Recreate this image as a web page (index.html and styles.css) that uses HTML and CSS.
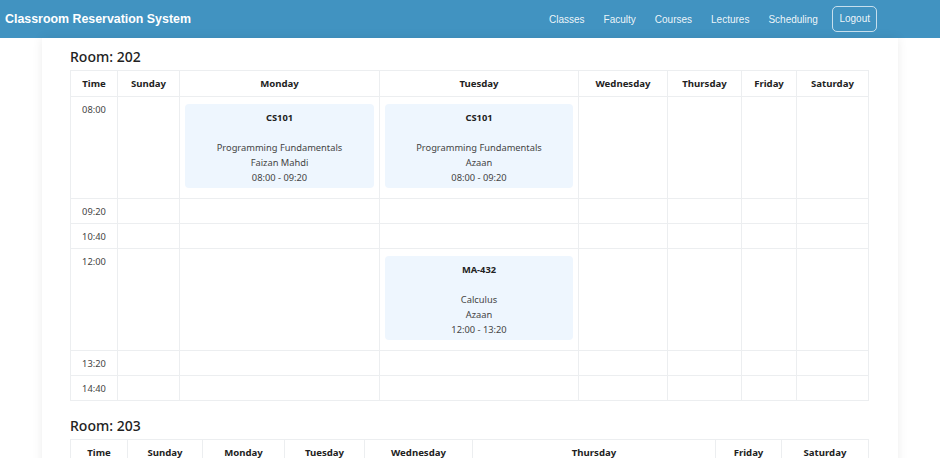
FILE: index.html
```html
<!DOCTYPE html>
<html lang="en">
<head>
<meta charset="utf-8">
<title>Classroom Reservation System</title>
<link rel="stylesheet" href="styles.css">
</head>
<body>
<nav class="navbar">
  <div class="brand">Classroom Reservation System</div>
  <ul class="nav-links">
    <li><a href="#">Classes</a></li>
    <li><a href="#">Faculty</a></li>
    <li><a href="#">Courses</a></li>
    <li><a href="#">Lectures</a></li>
    <li><a href="#">Scheduling</a></li>
    <li><a href="#" class="logout">Logout</a></li>
  </ul>
</nav>

<main class="container">
  <section class="room">
    <h3 class="room-title">Room: 202</h3>
    <table class="schedule">
      <colgroup>
        <col class="w47"><col class="w62"><col class="w200"><col class="w199"><col class="w89"><col class="w74"><col class="w55"><col class="w72">
      </colgroup>
      <thead>
        <tr><th>Time</th><th>Sunday</th><th>Monday</th><th>Tuesday</th><th>Wednesday</th><th>Thursday</th><th>Friday</th><th>Saturday</th></tr>
      </thead>
      <tbody>
        <tr>
          <td class="time">08:00</td><td></td>
          <td><div class="lecture"><strong>CS101</strong><br><br>Programming Fundamentals<br>Faizan Mahdi<br>08:00 - 09:20</div></td>
          <td><div class="lecture"><strong>CS101</strong><br><br>Programming Fundamentals<br>Azaan<br>08:00 - 09:20</div></td>
          <td></td><td></td><td></td><td></td>
        </tr>
        <tr><td class="time">09:20</td><td></td><td></td><td></td><td></td><td></td><td></td><td></td></tr>
        <tr><td class="time">10:40</td><td></td><td></td><td></td><td></td><td></td><td></td><td></td></tr>
        <tr>
          <td class="time">12:00</td><td></td><td></td>
          <td><div class="lecture"><strong>MA-432</strong><br><br>Calculus<br>Azaan<br>12:00 - 13:20</div></td>
          <td></td><td></td><td></td><td></td>
        </tr>
        <tr><td class="time">13:20</td><td></td><td></td><td></td><td></td><td></td><td></td><td></td></tr>
        <tr><td class="time">14:40</td><td></td><td></td><td></td><td></td><td></td><td></td><td></td></tr>
      </tbody>
    </table>
  </section>

  <section class="room">
    <h3 class="room-title">Room: 203</h3>
    <table class="schedule">
      <colgroup>
        <col class="w57"><col class="w75"><col class="w82"><col class="w80"><col class="w108"><col class="w243"><col class="w66"><col class="w87">
      </colgroup>
      <thead>
        <tr><th>Time</th><th>Sunday</th><th>Monday</th><th>Tuesday</th><th>Wednesday</th><th>Thursday</th><th>Friday</th><th>Saturday</th></tr>
      </thead>
      <tbody>
        <tr>
          <td class="time">08:00</td><td></td><td></td><td></td><td></td>
          <td><div class="lecture"><strong>CS201</strong><br><br>Object Oriented Programming and Design<br>Faizan Mahdi<br>08:00 - 09:20</div></td>
          <td></td><td></td>
        </tr>
        <tr><td class="time">09:20</td><td></td><td></td><td></td><td></td><td></td><td></td><td></td></tr>
      </tbody>
    </table>
  </section>
</main>
</body>
</html>
```

FILE: styles.css
```css
* { box-sizing: border-box; }

html, body {
  margin: 0;
  padding: 0;
  background: #ffffff;
}

body {
  font-family: "Noto Sans", "Open Sans", sans-serif;
  color: #333;
}

.navbar {
  height: 38px;
  background: #4193c1;
  display: flex;
  align-items: center;
  justify-content: space-between;
  padding: 0 63px 0 5px;
  font-family: "Liberation Sans", Arial, sans-serif;
}

.brand {
  color: #fff;
  font-weight: bold;
  font-size: 12.4px;
}

.nav-links {
  list-style: none;
  margin: 0;
  padding: 0;
  display: flex;
  align-items: center;
}

.nav-links a {
  display: block;
  color: rgba(255, 255, 255, 0.92);
  text-decoration: none;
  font-size: 10px;
  padding: 6px 9.5px;
}

.nav-links a.logout {
  margin-left: 5px;
  padding: 6px 6px;
  line-height: 12px;
  height: 26px;
  display: flex;
  align-items: center;
  border: 1px solid rgba(255, 255, 255, 0.7);
  border-radius: 5px;
}

.container {
  width: 856px;
  margin: 0 auto;
  padding: 9px 28px 20px;
  background: #fff;
  box-shadow: 0 0 10px rgba(0, 0, 0, 0.08);
}

.room { margin-bottom: 15px; }

.room-title {
  margin: 0 0 3px;
  font-size: 14px;
  line-height: 20px;
  font-weight: 500;
  color: #222;
}

.schedule {
  width: 797px;
  border-collapse: collapse;
  table-layout: fixed;
  font-size: 9.3px;
  line-height: 15px;
}

.schedule th,
.schedule td {
  border: 1px solid #eceef0;
  padding: 5px 5px 4px;
  text-align: center;
  vertical-align: top;
}

.schedule th {
  padding: 5px;
  font-weight: bold;
  font-size: 9.6px;
  color: #222;
}

.schedule td.time { color: #444; }

.lecture {
  margin: 2px 0 6px;
  padding: 6px 5px 3px;
  background: #eef6fe;
  border-radius: 4px;
  color: #444;
}

.lecture strong { color: #222; }

.w47 { width: 47px; }
.w62 { width: 62px; }
.w200 { width: 200px; }
.w199 { width: 199px; }
.w89 { width: 89px; }
.w74 { width: 74px; }
.w55 { width: 55px; }
.w72 { width: 72px; }
.w57 { width: 57px; }
.w75 { width: 75px; }
.w82 { width: 82px; }
.w80 { width: 80px; }
.w108 { width: 108px; }
.w243 { width: 243px; }
.w66 { width: 66px; }
.w87 { width: 87px; }
```
